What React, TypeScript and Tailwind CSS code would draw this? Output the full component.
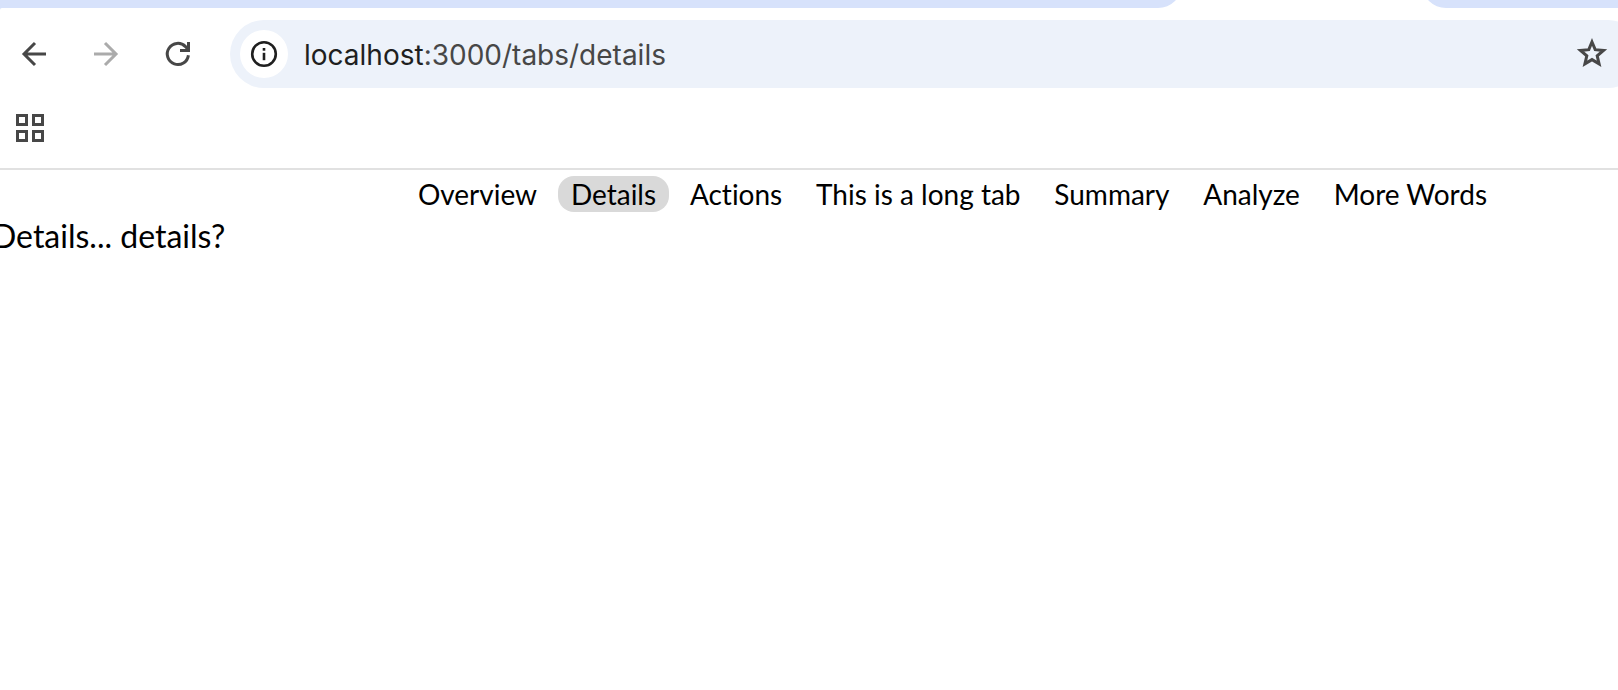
const tabs = [
  { label: "Overview", path: "/tabs/overview" },
  { label: "Details", path: "/tabs/details" },
  { label: "Actions", path: "/tabs/actions" },
  { label: "This is a long tab", path: "/tabs/long" },
  { label: "Summary", path: "/tabs/summary" },
  { label: "Analyze", path: "/tabs/analyze" },
  { label: "More Words", path: "/tabs/words" },
];

const activePath = "/tabs/details";

function TabStrip() {
  return (
    <div className="flex h-2 items-end overflow-hidden bg-white">
      <div className="h-8 flex-1 rounded-br-[24px] bg-[#d7e2fb]" />
      <div className="w-60 shrink-0" />
      <div className="h-8 w-[196px] shrink-0 rounded-bl-[24px] bg-[#d7e2fb]" />
    </div>
  );
}

function Toolbar() {
  return (
    <div className="flex items-center overflow-hidden pt-3">
      <div className="flex shrink-0 items-center gap-9 pl-4">
        <button aria-label="Back" className="size-9 text-[#474747]">
          <svg viewBox="0 0 36 36" fill="none" stroke="currentColor" strokeWidth="3">
            <path d="M30 18H8M19 7L8 18l11 11" />
          </svg>
        </button>
        <button aria-label="Forward" className="size-9 text-[#ababab]">
          <svg viewBox="0 0 36 36" fill="none" stroke="currentColor" strokeWidth="3">
            <path d="M6 18h22M17 7l11 11-11 11" />
          </svg>
        </button>
        <button aria-label="Reload" className="size-9 text-[#474747]">
          <svg viewBox="0 0 36 36" fill="none" stroke="currentColor" strokeWidth="3">
            <path d="M28.4 19.2A10.6 10.6 0 1 1 25.5 10.6L28 13.5" />
            <path d="M28.5 6v8.5H20" />
          </svg>
        </button>
      </div>
      <div className="-mr-6 ml-[34px] flex h-[68px] flex-1 items-center rounded-full bg-[#edf2fa] pr-[34px] pl-[10px]">
        <button
          aria-label="View site information"
          className="flex size-12 shrink-0 items-center justify-center rounded-full bg-white text-[#1f1f1f]"
        >
          <svg className="size-7" viewBox="0 0 28 28" fill="none" stroke="currentColor">
            <circle cx="14" cy="14" r="11.8" strokeWidth="2.6" />
            <path d="M14 12.8v7.4" strokeWidth="2.6" />
            <path d="M14 8v2.7" strokeWidth="2.6" />
          </svg>
        </button>
        <a
          href="http://localhost:3000/tabs/details"
          className="ml-4 flex-1 pt-px font-[Inter,sans-serif] text-[28px] leading-9 text-[#474747]"
        >
          <span className="text-[#1f1f1f]">localhost</span>:3000/tabs/details
        </a>
        <button aria-label="Bookmark this tab" className="size-8 shrink-0 text-[#474747]">
          <svg viewBox="0 0 32 32" fill="none" stroke="currentColor" strokeWidth="3">
            <path d="M16 4l3.2 7.7 8.3.7-6.3 5.4 1.9 8.1-7.1-4.3-7.1 4.3 1.9-8.1-6.3-5.4 8.3-.7z" />
          </svg>
        </button>
      </div>
    </div>
  );
}

export default function App() {
  return (
    <div className="min-h-screen overflow-hidden bg-white">
      <header className="border-b-2 border-[#e1e1e1]">
        <TabStrip />
        <div className="bg-[#d7e2fb]">
          <div className="rounded-tl-xs bg-white">
            <Toolbar />
            <div className="flex h-20 items-center px-4">
              <button aria-label="Apps" className="size-7 text-[#474747]">
                <svg viewBox="0 0 28 28" fill="none" stroke="currentColor" strokeWidth="3">
                  <path d="M1.5 1.5h9v9h-9zM17.5 1.5h9v9h-9zM1.5 17.5h9v9h-9zM17.5 17.5h9v9h-9z" />
                </svg>
              </button>
            </div>
          </div>
        </div>
      </header>
      <main className="font-[Lato,sans-serif] text-black [font-variant-ligatures:none]">
        <nav className="mr-[118px] ml-[405px] flex gap-2 pt-[6px]">
          {tabs.map((tab) => (
            <a
              key={tab.path}
              href={tab.path}
              aria-current={tab.path === activePath ? "page" : undefined}
              className="flex-auto rounded-2xl px-3 text-center text-[28px] leading-9 whitespace-nowrap aria-[current=page]:bg-[#d9d9d9]"
            >
              {tab.label}
            </a>
          ))}
        </nav>
        <p className="-ml-2 text-[32px] leading-12">Details... details?</p>
      </main>
    </div>
  );
}
